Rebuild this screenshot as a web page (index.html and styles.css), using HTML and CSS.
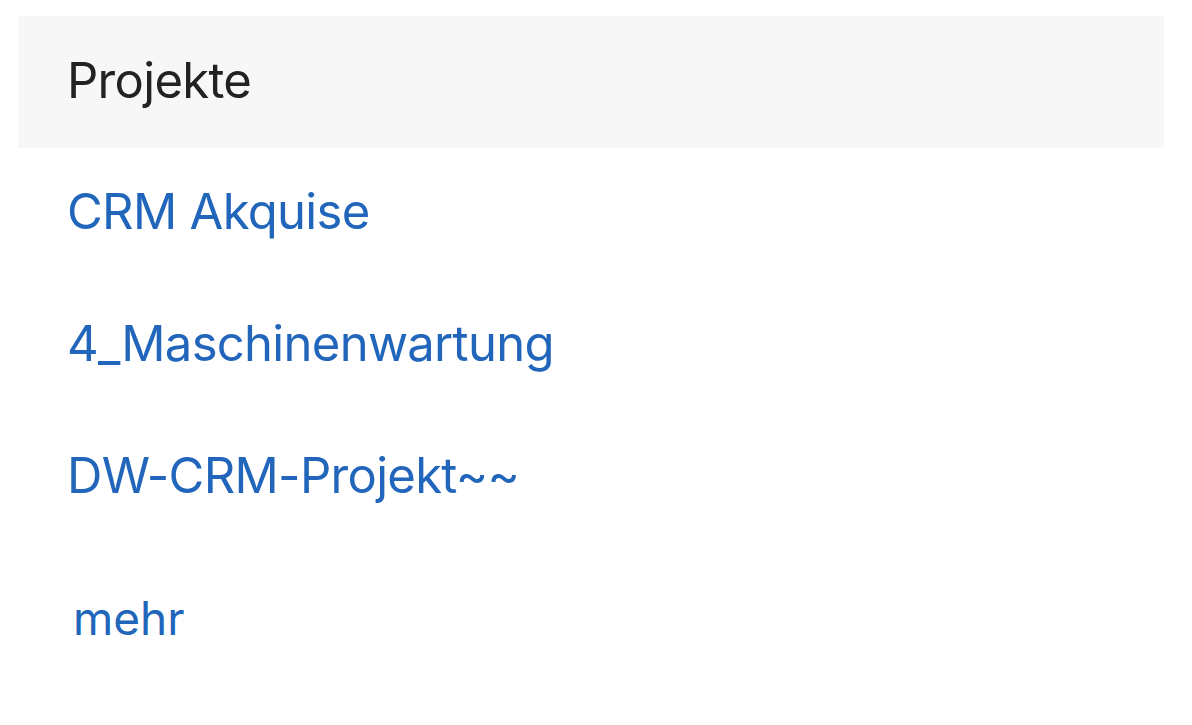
FILE: index.html
```html
<!DOCTYPE html>
<html lang="de">
<head>
<meta charset="utf-8">
<link rel="stylesheet" href="styles.css">
</head>
<body>
<div class="panel">
  <div class="panel-header">Projekte</div>
  <ul class="project-list">
    <li class="project-item"><a href="#">CRM Akquise</a></li>
    <li class="project-item"><a href="#">4_Maschinenwartung</a></li>
    <li class="project-item"><a href="#">DW-CRM-Projekt~~</a></li>
  </ul>
  <div class="more-row"><a href="#" class="more-link">mehr</a></div>
</div>
</body>
</html>
```
FILE: styles.css
```css
html, body {
  margin: 0;
  padding: 0;
  background: #ffffff;
}
body {
  font-family: Inter, "Noto Sans", sans-serif;
  padding: 16px 28px 0 18px;
}
.panel {
  display: flex;
  flex-direction: column;
}
.panel-header {
  background: #f7f7f7;
  height: 132px;
  display: flex;
  align-items: center;
  padding: 0 0 4px 49px;
  font-size: 49px;
  letter-spacing: -0.7px;
  color: #222222;
  box-sizing: border-box;
}
.project-list {
  list-style: none;
  margin: 0;
  padding: 0;
}
.project-item {
  height: 132px;
  display: flex;
  align-items: center;
  padding: 0 0 5px 49px;
  box-sizing: border-box;
  font-size: 49px;
  letter-spacing: -0.7px;
}
.project-item a, .more-link {
  color: #2266bb;
  text-decoration: none;
}
.more-row {
  padding: 46px 0 0 55px;
  font-size: 46px;
}
```
